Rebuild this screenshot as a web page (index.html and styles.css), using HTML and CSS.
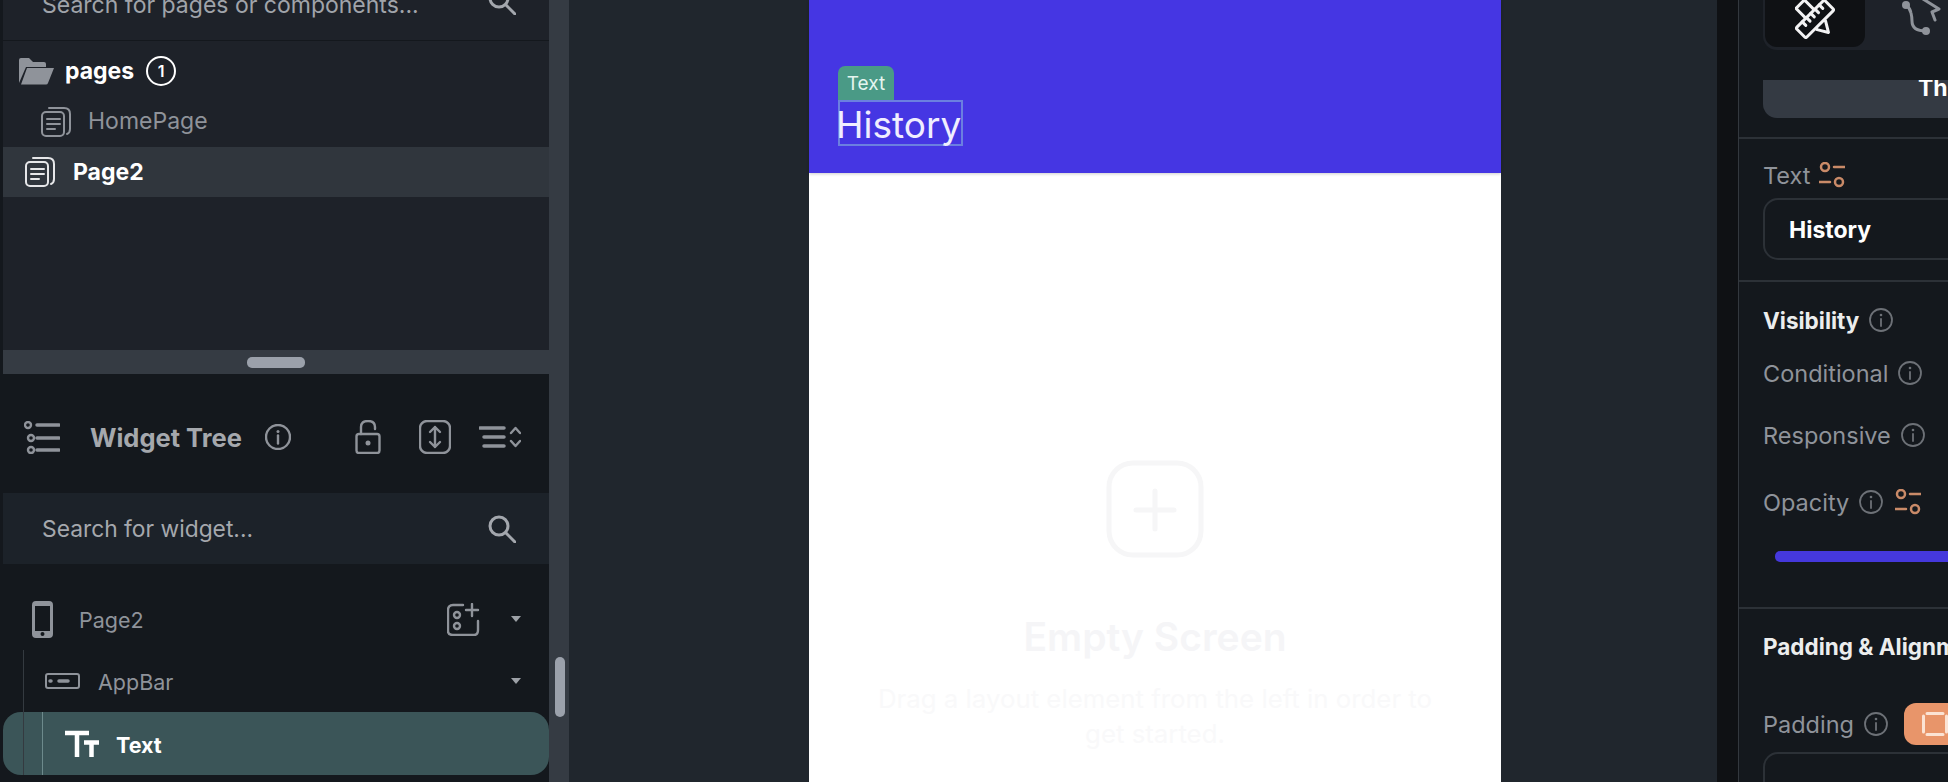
FILE: index.html
```html
<!DOCTYPE html>
<html lang="en">
<head>
  <meta charset="UTF-8" />
  <title>Page2 - Builder</title>
  <link rel="stylesheet" href="styles.css">
</head>
<body>

  <aside class="left">
    <div class="pages-panel">
      <div class="pages-search">
        <span>Search for pages or components...</span>
        <svg class="search-icon" viewBox="0 0 28 28"><circle cx="11" cy="11" r="9"/><path d="M18 18l9 9"/></svg>
      </div>
      <div class="folder-row">
        <svg class="folder-icon" viewBox="0 0 36 28"><path class="fill-grey" d="M1 26V3q0-2 2-2h8l4 4h11q2 0 2 2v3H8L1 26z"/><path class="fill-grey" d="M9 11h27l-6 15q-.5 1.500-2 1.500H3z"/></svg>
        <span class="folder-name">pages</span>
        <span class="count">1</span>
      </div>
      <div class="page-row">
        <svg class="page-icon" viewBox="0 0 30 30"><rect x="1" y="5" width="22" height="24" rx="4"/><path d="M8 1h15q6 0 6 6v15q0 4-3 5M6 12h13M6 17h13M6 22h8"/></svg>
        <span>HomePage</span>
      </div>
      <div class="page-row active">
        <svg class="page-icon" viewBox="0 0 30 30"><rect x="1" y="5" width="22" height="24" rx="4"/><path d="M8 1h15q6 0 6 6v15q0 4-3 5M6 12h13M6 17h13M6 22h8"/></svg>
        <span>Page2</span>
      </div>
    </div>

    <div class="divider"><div class="handle"></div></div>

    <div class="tree-panel">
      <div class="tree-header">
        <svg class="list-icon" viewBox="0 0 36 33"><circle cx="4" cy="4" r="3"/><circle cx="7" cy="17" r="3"/><circle cx="7" cy="29" r="3"/><path class="thick" d="M13 4h22M13 17h22M13 29h22"/></svg>
        <span class="tree-title">Widget Tree</span>
        <svg class="info-large" viewBox="0 0 26 26"><circle cx="13" cy="13" r="12"/><path d="M13 11.500v8"/><circle class="dot" cx="13" cy="7.500" r="1.500"/></svg>
        <svg class="lock-icon" viewBox="0 0 26 34"><rect x="1.500" y="14" width="23" height="19" rx="2.500"/><path d="M6 14V7q0-6 7-6t7 6v2"/><circle class="dot" cx="13" cy="23" r="2.500"/></svg>
        <svg class="expand-icon" viewBox="0 0 32 34"><rect x="1" y="1" width="30" height="32" rx="7"/><path d="M16 7v20M11 12l5-5 5 5M11 22l5 5 5-5"/></svg>
        <svg class="sort-icon" viewBox="0 0 42 24"><path class="thick" d="M1 3h24M5 12h20M5 21h20"/><path d="M32 8l4.500-5 4.500 5M32 16l4.500 5 4.500-5"/></svg>
      </div>
      <div class="tree-search">
        <span>Search for widget...</span>
        <svg class="search-icon" viewBox="0 0 28 28"><circle cx="11" cy="11" r="9"/><path d="M18 18l9 9"/></svg>
      </div>
      <div class="tree">
        <div class="tree-row root-row">
          <svg class="phone-icon" viewBox="0 0 21 37"><path class="fill-grey" fill-rule="evenodd" d="M4 0h13q4 0 4 4v29q0 4-4 4H4q-4 0-4-4V4q0-4 4-4zM3 5v25h15V5zM10.500 31a2 2 0 100 4 2 2 0 000-4z"/></svg>
          <span class="tree-label">Page2</span>
          <svg class="add-icon" viewBox="0 0 33 33"><path d="M16 2H6Q1 2 1 7v21q0 4 5 4h21q4 0 4-5V18M25 1v12M19 7h12"/><circle cx="10" cy="12" r="3"/><circle cx="10" cy="23" r="3"/></svg>
          <span class="caret"></span>
        </div>
        <div class="tree-row appbar-row">
          <svg class="appbar-icon" viewBox="0 0 35 16"><rect x="1" y="1" width="33" height="14" rx="2"/><path class="thick" d="M14 8h9M5 8h1"/></svg>
          <span class="tree-label">AppBar</span>
          <span class="caret"></span>
        </div>
        <div class="tree-row text-row">
          <svg class="tt-icon" viewBox="0 0 36 28"><path d="M1 3h24M13 3v24M20 12.500h15M27.500 12.500V27"/></svg>
          <span class="text-label">Text</span>
        </div>
      </div>
    </div>
  </aside>

  <div class="rail"><div class="rail-thumb"></div></div>

  <main class="canvas">
    <div class="phone">
      <div class="appbar">
        <div class="chip">Text</div>
        <div class="selected">History</div>
      </div>
      <div class="empty">
        <svg class="empty-icon" viewBox="0 0 98 98"><rect x="3" y="3" width="92" height="92" rx="24"/><path d="M49 31v38M30 50h38"/></svg>
        <div class="empty-title">Empty Screen</div>
        <div class="empty-text">Drag a layout element from the left in order to<br>get started.</div>
      </div>
    </div>
  </main>

  <div class="strip"></div>

  <aside class="props">
    <section class="props-top">
      <div class="tabs">
        <div class="tab active">
          <svg class="tab-icon" viewBox="0 0 40 40"><g transform="rotate(-45 20 20)"><path d="M14 -1h12v30l-6 10-6-10z"/></g><g transform="rotate(45 20 20)"><rect class="ruler" x="13" y="0" width="14" height="40" rx="1.500"/><path d="M13 7h5M13 13h5M13 19h5M13 25h5M13 31h5"/></g></svg>
        </div>
        <div class="tab">
          <svg class="tab-icon-grey" viewBox="0 0 42 40"><circle class="fill-grey" cx="7" cy="6" r="4"/><circle class="fill-grey" cx="27" cy="32" r="4"/><path d="M7 6q4 3 5 8 1 4 1 8 0 10 14 10M24 0l16 10-7 3 3 8"/></svg>
        </div>
      </div>
      <div class="theme-btn">Theme Settings</div>
    </section>

    <section class="props-text">
      <div class="label-row">
        <span class="prop-label">Text</span>
        <svg class="var-icon" viewBox="0 0 26 26"><circle cx="6" cy="5" r="4"/><circle cx="20" cy="20" r="4"/><path d="M15 5h11M0 20h11"/></svg>
      </div>
      <div class="text-input">History</div>
    </section>

    <section class="props-visibility">
      <div class="section-title">Visibility <svg class="info" viewBox="0 0 24 24"><circle cx="12" cy="12" r="11"/><path d="M12 11v7"/><circle class="dot" cx="12" cy="7" r="1.300"/></svg></div>
      <div class="prop-row conditional"><span class="prop-label">Conditional</span><svg class="info" viewBox="0 0 24 24"><circle cx="12" cy="12" r="11"/><path d="M12 11v7"/><circle class="dot" cx="12" cy="7" r="1.300"/></svg></div>
      <div class="prop-row responsive"><span class="prop-label">Responsive</span><svg class="info" viewBox="0 0 24 24"><circle cx="12" cy="12" r="11"/><path d="M12 11v7"/><circle class="dot" cx="12" cy="7" r="1.300"/></svg></div>
      <div class="prop-row opacity"><span class="prop-label">Opacity</span><svg class="info" viewBox="0 0 24 24"><circle cx="12" cy="12" r="11"/><path d="M12 11v7"/><circle class="dot" cx="12" cy="7" r="1.300"/></svg><svg class="var-icon" viewBox="0 0 26 26"><circle cx="6" cy="5" r="4"/><circle cx="20" cy="20" r="4"/><path d="M15 5h11M0 20h11"/></svg></div>
      <div class="slider"></div>
    </section>

    <section class="props-padding">
      <div class="section-title">Padding &amp; Alignment</div>
      <div class="prop-row padding-row">
        <span class="prop-label">Padding</span>
        <svg class="info" viewBox="0 0 24 24"><circle cx="12" cy="12" r="11"/><path d="M12 11v7"/><circle class="dot" cx="12" cy="7" r="1.300"/></svg>
        <div class="padding-btn"><svg class="padding-glyph" viewBox="0 0 26 24"><path d="M1.500 4v16M5 1.500h16M5 22.500h16M24.500 4v16"/></svg></div>
      </div>
      <div class="padding-box"></div>
    </section>
  </aside>

</body>
</html>
```

FILE: styles.css
```css
* { box-sizing: border-box; }

html, body {
  height: 782px;
  overflow: hidden;
}

body {
  margin: 0;
  display: flex;
  background: #20262d;
  color: #fff;
  font-family: Inter, Roboto, sans-serif;
}

svg {
  flex: none;
  fill: none;
  stroke: #8f939a;
  stroke-width: 2;
  stroke-linecap: round;
  stroke-linejoin: round;
}

svg .fill-grey { fill: #8f939a; stroke: none; }
svg .dot { fill: #8f939a; stroke: none; }
svg .thick { stroke-width: 3.5; }

/* left column */
.left {
  width: 549px;
  height: 782px;
  flex: none;
  display: flex;
  flex-direction: column;
  border-left: 3px solid #14181d;
}

.pages-panel {
  height: 350px;
  flex: none;
  background: #1e2229;
}

.pages-search {
  height: 41px;
  padding: 0 33px 21px 39px;
  display: flex;
  align-items: flex-end;
  justify-content: space-between;
  overflow: hidden;
  border-bottom: 1px solid #14181d;
  color: #a0a4aa;
  font-size: 23px;
  line-height: 28px;
}

.search-icon {
  width: 28px;
  height: 28px;
  stroke-width: 3;
  stroke: #a3a7ad;
}

.pages-search .search-icon { margin-bottom: 4px; }

.folder-row {
  height: 56px;
  padding: 4px 0 0 15px;
  display: flex;
  align-items: center;
  font-size: 23px;
  font-weight: 700;
}

.folder-icon { width: 36px; height: 28px; margin-right: 11px; }
.folder-name { margin-right: 12px; }

.count {
  width: 30px;
  height: 30px;
  border: 2px solid #fff;
  border-radius: 50%;
  display: flex;
  align-items: center;
  justify-content: center;
  font-size: 16px;
  font-weight: 600;
}

.page-row {
  height: 50px;
  padding-left: 38px;
  display: flex;
  align-items: center;
  gap: 17px;
  color: #8f939a;
  font-size: 23px;
}

.page-row span { margin-top: -2px; }

.page-row.active {
  padding-left: 22px;
  gap: 18px;
  background: #30363d;
  color: #fff;
  font-weight: 700;
}

.page-row.active span { margin-top: 0; }
.page-row.active svg { stroke: #e6e7e9; }
.page-icon { width: 30px; height: 30px; }

.divider {
  height: 24px;
  flex: none;
  display: flex;
  align-items: center;
  justify-content: center;
  background: #353b43;
}

.handle {
  width: 58px;
  height: 11px;
  border-radius: 5px;
  background: #9ba1ab;
}

.tree-panel {
  flex: 1;
  background: #14181d;
}

.tree-header {
  height: 119px;
  padding: 7px 0 0 21px;
  display: flex;
  align-items: center;
}

.list-icon { width: 36px; height: 33px; stroke-width: 2.400; margin-right: 30px; }

.tree-title {
  width: 175px;
  color: #a5a8ad;
  font-size: 25.500px;
  font-weight: 700;
  white-space: nowrap;
}

.info-large { width: 26px; height: 26px; margin-right: 64px; stroke-width: 2.400; }
.lock-icon { width: 26px; height: 34px; margin-right: 38px; stroke-width: 2.400; }
.expand-icon { width: 32px; height: 34px; margin-right: 28px; stroke-width: 2.400; }
.sort-icon { width: 42px; height: 24px; stroke-width: 2.400; }

.tree-search {
  height: 71px;
  padding: 0 33px 0 39px;
  display: flex;
  align-items: center;
  justify-content: space-between;
  background: #1c2229;
  color: #a5a8ad;
  font-size: 22.800px;
}

.tree {
  position: relative;
  padding-top: 24px;
}

.tree::before {
  content: "";
  position: absolute;
  z-index: 1;
  left: 20px;
  top: 86px;
  bottom: 0;
  width: 1px;
  background: #343a40;
}

.tree-row {
  height: 62px;
  display: flex;
  align-items: center;
}

.root-row { padding-left: 29px; }

.tree-label {
  margin-top: 2px;
  color: #8f939a;
  font-size: 21.500px;
}

.phone-icon { width: 21px; height: 37px; margin-right: 26px; }
.root-row .tree-label { flex: 1; }
.add-icon { width: 33px; height: 33px; margin-right: 31px; stroke-width: 2.400; }

.caret {
  width: 0;
  height: 0;
  margin-right: 28px;
  border-left: 5px solid transparent;
  border-right: 5px solid transparent;
  border-top: 6px solid #9da1a7;
}

.appbar-row { padding-left: 42px; }
.appbar-icon { width: 35px; height: 16px; margin-right: 18px; }
.appbar-row .tree-label { flex: 1; }

.text-row {
  position: relative;
  height: 63px;
  padding-left: 61px;
  border-radius: 18px;
  background: #3b5558;
}

.text-row::before {
  content: "";
  position: absolute;
  left: 39px;
  top: 0;
  bottom: 0;
  width: 1px;
  background: #6d8a8c;
}

.tt-icon {
  width: 36px;
  height: 28px;
  margin-right: 16px;
  stroke: #fff;
  stroke-width: 4.500;
  stroke-linecap: butt;
}

.text-label {
  margin-top: 2px;
  font-size: 21.500px;
  font-weight: 700;
}

.rail {
  position: relative;
  width: 20px;
  flex: none;
  background: #353b43;
}

.rail-thumb {
  position: absolute;
  left: 6px;
  top: 657px;
  width: 10px;
  height: 60px;
  border-radius: 5px;
  background: #9ba1ab;
}

/* phone in the middle */
.canvas {
  width: 1150px;
  flex: none;
  padding-left: 240px;
  background: #20262d;
}

.phone {
  width: 692px;
  height: 782px;
  background: #fff;
}

.appbar {
  height: 173px;
  padding: 66px 0 0 29px;
  background: #4536e3;
  box-shadow: 0 1px 3px rgba(0, 0, 0, 0.2);
}

.chip {
  width: 56px;
  height: 34px;
  display: flex;
  align-items: center;
  justify-content: center;
  border-radius: 7px 7px 0 0;
  background: #4a9a86;
  color: #e4f5ef;
  font-size: 19px;
}

.selected {
  width: 125px;
  height: 46px;
  border: 2px solid #6b7fe0;
  color: #f0eeff;
  font-size: 37px;
  line-height: 46px;
  text-indent: -4px;
  white-space: nowrap;
}

.empty {
  padding-top: 287px;
  text-align: center;
}

.empty-icon {
  display: block;
  width: 98px;
  height: 98px;
  margin: 0 auto;
  stroke: #f6f6f7;
  stroke-width: 5;
}

.empty-title {
  margin-top: 56px;
  color: #f5f5f7;
  font-size: 39px;
  font-weight: 600;
  line-height: 46px;
}

.empty-text {
  margin-top: 21px;
  color: #f9f9fa;
  font-size: 25.800px;
  line-height: 35px;
}

/* right column */
.strip {
  width: 21px;
  flex: none;
  margin-left: -2px;
  background: #0f1114;
}

.props {
  flex: 1;
  min-width: 0;
  height: 782px;
  overflow: hidden;
  border-left: 1px solid #33383e;
  background: #14181d;
}

.props section {
  width: 400px;
  padding-left: 24px;
  border-bottom: 2px solid #2c3137;
}

.props-top { height: 139px; }

.tabs {
  display: flex;
  height: 50px;
  padding: 0 0 3px 2px;
  border-radius: 0 0 14px 14px;
  background: #1e2229;
}

.tab {
  width: 100px;
  display: flex;
  align-items: center;
  justify-content: center;
  padding-bottom: 10px;
}

.tab.active {
  border-radius: 0 0 12px 12px;
  background: #0f1114;
}

.tab-icon { width: 40px; height: 40px; stroke: #f2f2f3; stroke-width: 3; }
.tab-icon .ruler { fill: #0f1114; }
.tab-icon-grey { width: 42px; height: 40px; margin-left: 10px; stroke-width: 3; }

.theme-btn {
  height: 38px;
  margin-top: 30px;
  padding-left: 155px;
  border-radius: 0 0 14px 14px;
  background: #343a43;
  font-size: 23px;
  font-weight: 700;
  line-height: 16px;
  white-space: nowrap;
  overflow: hidden;
}

.props-text { height: 143px; padding-top: 21px; }

.label-row, .prop-row {
  display: flex;
  align-items: center;
}

.label-row { gap: 9px; height: 30px; }

.prop-label {
  color: #8f939a;
  font-size: 23.500px;
}

.var-icon { width: 26px; height: 26px; stroke: #c98a68; stroke-width: 2.500; }

.text-input {
  height: 62px;
  margin-top: 8px;
  padding: 2px 0 0 24px;
  display: flex;
  align-items: center;
  border: 2px solid #2c3137;
  border-radius: 15px;
  font-size: 23px;
  font-weight: 700;
}

.props-visibility { height: 327px; padding-top: 24px; }

.section-title {
  display: flex;
  align-items: center;
  gap: 10px;
  height: 28px;
  font-size: 22.500px;
  font-weight: 700;
  color: #eceded;
  white-space: nowrap;
}

.info { width: 24px; height: 24px; stroke: #6d7177; stroke-width: 1.800; }
.info .dot { fill: #6d7177; }

.prop-row { gap: 10px; height: 30px; }
.conditional { margin-top: 24px; }
.responsive { margin-top: 32px; }
.opacity { margin-top: 37px; }
.opacity .var-icon { margin-left: 2px; }

.slider {
  width: 300px;
  height: 11px;
  margin: 34px 0 0 12px;
  border-radius: 5px;
  background: #4538dc;
}

.props-padding { padding-top: 23px; border-bottom: 0 !important; }

.padding-row { margin-top: 49px; }

.padding-btn {
  width: 100px;
  height: 42px;
  margin-left: 6px;
  padding-left: 18px;
  display: flex;
  align-items: center;
  border-radius: 12px;
  background: #e8956a;
}

.padding-glyph {
  width: 26px;
  height: 24px;
  stroke: #fbe3d4;
  stroke-width: 3;
}

.padding-box {
  height: 70px;
  margin-top: 13px;
  border: 2px solid #2c3137;
  border-radius: 15px;
}
```
